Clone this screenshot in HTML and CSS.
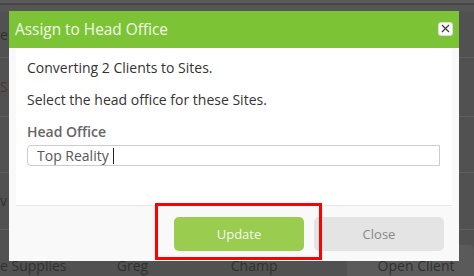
FILE: index.html
```html
<!DOCTYPE html>
<html lang="en">
<head>
    <meta charset="UTF-8">
    <meta name="viewport" content="width=device-width, initial-scale=1.0">
    <title>Assign to Head Office</title>
    <link rel="stylesheet" href="styles.css">
</head>
<body>
    <!-- table behind the dark overlay -->
    <div class="backdrop">
        <div class="bg-row bg-top"></div>
        <div class="bg-row r1"><span class="bg-cell">e</span></div>
        <div class="bg-row r2"><span class="bg-cell tag">S</span></div>
        <div class="bg-row r3"></div>
        <div class="bg-row r4"><span class="bg-cell">v</span></div>
        <div class="bg-row bg-last">
            <span class="bg-cell c1">e Supplies</span>
            <span class="bg-cell c2">Greg</span>
            <span class="bg-cell c3">Champ</span>
            <span class="bg-btn">Open Client</span>
        </div>
    </div>

    <div class="modal">
        <div class="modal-header">
            <h2>Assign to Head Office</h2>
            <button class="modal-close" aria-label="Close">
                <svg width="9" height="9" viewBox="0 0 9 9">
                    <path d="M1 1 L8 8 M8 1 L1 8" stroke="#3a3a3a" stroke-width="1.1" fill="none"/>
                </svg>
            </button>
        </div>
        <div class="modal-body">
            <p>Converting 2 Clients to Sites.</p>
            <p>Select the head office for these Sites.</p>
            <label for="head-office">Head Office</label>
            <div class="field">
                <input type="text" id="head-office" value="Top Reality"><span class="caret"></span>
            </div>
        </div>
        <div class="modal-footer">
            <button class="btn btn-update">Update</button>
            <button class="btn btn-close">Close</button>
        </div>
        <div class="highlight"></div>
    </div>
</body>
</html>
```

FILE: styles.css
```css
body {
    margin: 0;
    font-family: "Open Sans", "Liberation Sans", sans-serif;
    background-color: #515151;
    width: 474px;
    height: 276px;
    overflow: hidden;
    position: relative;
}

.backdrop {
    display: flex;
    flex-direction: column;
    color: #303030;
    font-size: 14px;
}

.bg-row {
    box-sizing: border-box;
    border-bottom: 1px solid #5e5e5e;
    display: flex;
    align-items: center;
}

.bg-top {
    height: 12px;
    background: linear-gradient(#5b5b5b 0 3px, #474747 3px 5px, #555 5px);
    border-bottom: none;
}

.r1 { height: 46px; }
.r2 { height: 59px; }
.r3 { height: 56px; }
.r4 { height: 57px; }

.bg-cell {
    line-height: 18px;
}

.tag {
    color: #4a3535;
}

.bg-last {
    height: 46px;
    border-bottom: none;
    align-items: flex-start;
}

.bg-last .bg-cell {
    margin-top: 27px;
}

.bg-last .c1 {
    width: 120px;
}

.bg-last .c2 {
    width: 117px;
}

.bg-last .c3 {
    width: 119px;
}

.bg-btn {
    margin-top: 15px;
    height: 40px;
    box-sizing: border-box;
    background: #5a5a5a;
    border-radius: 5px;
    padding: 12px 0 0 31px;
    line-height: 18px;
    width: 130px;
}

.modal {
    position: absolute;
    left: 9px;
    top: 11px;
    width: 450px;
    height: 250px;
    background: #f9f9f9;
    display: flex;
    flex-direction: column;
}

.modal-header {
    height: 37px;
    background: #7cc436;
    display: flex;
    align-items: center;
    justify-content: space-between;
    padding: 0 6px 0 6px;
}

.modal-header h2 {
    margin: 0 0 1px 0;
    font-size: 15.4px;
    font-weight: normal;
    color: #f2f9ea;
}

.modal-close {
    width: 15px;
    height: 14px;
    padding: 0;
    border: 1px solid #dcdcdc;
    border-radius: 3px;
    background: #fbfbfb;
    display: flex;
    align-items: center;
    justify-content: center;
    margin-bottom: 2px;
}

.modal-body {
    margin: 0 7px;
    height: 147px;
    padding: 10px 11px 0 11px;
    background: #fff;
    border-bottom: 1px solid #e8e8e8;
    color: #333;
    font-size: 14px;
}

.modal-body p {
    margin: 0 0 13px 0;
    line-height: 19px;
}

.modal-body label {
    display: block;
    font-weight: 600;
    color: #666;
    line-height: 19px;
    margin-bottom: 4px;
}

.field {
    position: relative;
    width: 413px;
}

.field input {
    width: 100%;
    box-sizing: border-box;
    height: 21px;
    border: 1px solid #ccc;
    border-radius: 4px 0 0 4px;
    padding: 0 9px;
    font-family: inherit;
    font-size: 14px;
    color: #555;
    outline: none;
}

.caret {
    position: absolute;
    left: 86px;
    top: 3px;
    width: 1px;
    height: 16px;
    background: #222;
}

.modal-footer {
    flex: 1;
    display: flex;
    justify-content: flex-end;
    align-items: center;
    gap: 10px;
    padding-right: 15px;
}

.btn {
    width: 130px;
    height: 34px;
    border: none;
    border-radius: 5px;
    font-family: inherit;
    font-size: 13px;
}

.btn-update {
    background: #99cc4f;
    color: #f4f9ee;
}

.btn-close {
    background: #e4e4e4;
    color: #888;
}

.highlight {
    position: absolute;
    left: 146px;
    top: 192px;
    width: 161px;
    height: 51px;
    border: 3px solid #ff0000;
}
```
